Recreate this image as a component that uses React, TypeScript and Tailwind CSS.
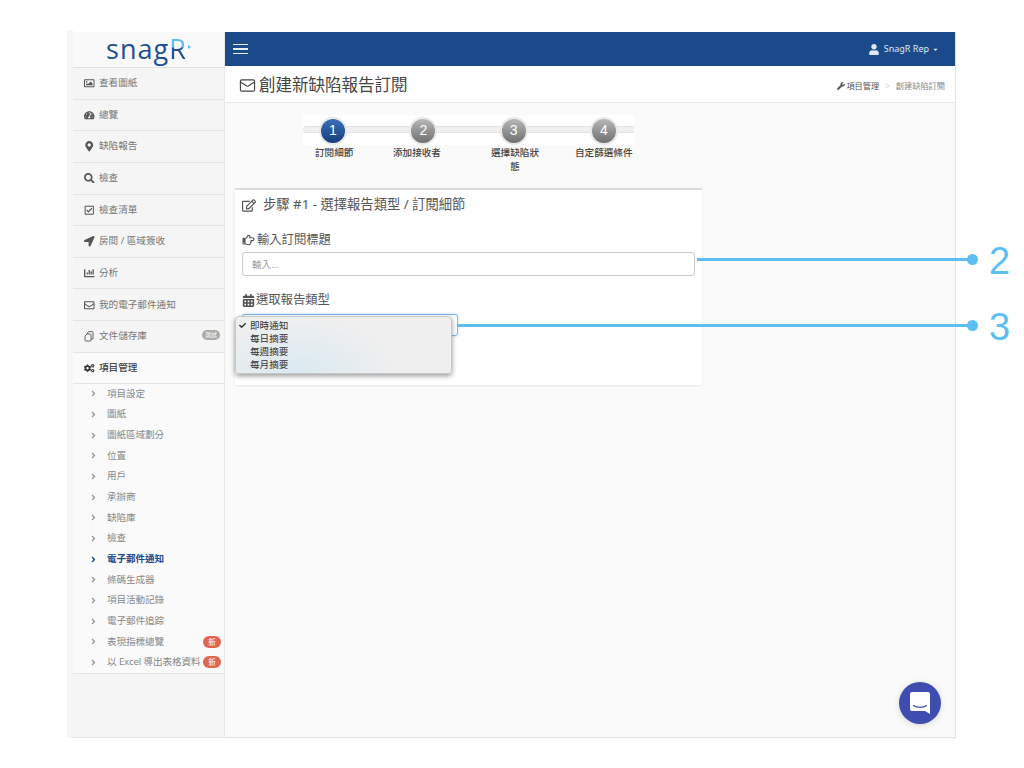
import React from 'react';
import {
  FaAngleRight,
  FaCalendarAlt,
  FaCaretDown,
  FaChartBar,
  FaCheck,
  FaCogs,
  FaLocationArrow,
  FaMapMarkerAlt,
  FaRegCheckSquare,
  FaRegEdit,
  FaRegEnvelope,
  FaRegHandPointRight,
  FaRegImage,
  FaSearch,
  FaTachometerAlt,
  FaUser,
  FaWrench,
} from 'react-icons/fa';
import { Mail } from 'lucide-react';

const FONT = "font-['Noto_Sans','Noto_Sans_CJK_TC',sans-serif]";

const FilesIcon = () => (
  <svg width="11" height="11" viewBox="0 0 11 11" fill="none" stroke="#555" strokeWidth="0.9">
    <path d="M3.5 3V1.8L4.8.6h3.4a.8.8 0 0 1 .8.8v6a.8.8 0 0 1-.8.8H7" />
    <path d="M1 5l2-2h3.2a.8.8 0 0 1 .8.8v5.4a.8.8 0 0 1-.8.8H1.8a.8.8 0 0 1-.8-.8z" />
  </svg>
);

const mainMenu = [
  { label: '查看圖紙', icon: <FaRegImage /> },
  { label: '總覽', icon: <FaTachometerAlt /> },
  { label: '缺陷報告', icon: <FaMapMarkerAlt /> },
  { label: '檢查', icon: <FaSearch /> },
  { label: '檢查清單', icon: <FaRegCheckSquare /> },
  { label: '房間 / 區域簽收', icon: <FaLocationArrow /> },
  { label: '分析', icon: <FaChartBar /> },
  { label: '我的電子郵件通知', icon: <FaRegEnvelope /> },
];

const subMenu = [
  { label: '項目設定' },
  { label: '圖紙' },
  { label: '圖紙區域劃分' },
  { label: '位置' },
  { label: '用戶' },
  { label: '承辦商' },
  { label: '缺陷庫' },
  { label: '檢查' },
  { label: '電子郵件通知', active: true },
  { label: '條碼生成器' },
  { label: '項目活動記錄' },
  { label: '電子郵件追踪' },
  { label: '表現指標總覽', isNew: true },
  { label: '以 Excel 導出表格資料', isNew: true },
];

const steps = ['訂閱細節', '添加接收者', '選擇缺陷狀態', '自定篩選條件'];

const MenuRow = ({ icon, label, badge, bold }: { icon: React.ReactNode; label: string; badge?: boolean; bold?: boolean }) => (
  <div className={`flex items-center h-[31.65px] pl-[11px] pr-[4px] border-b border-[#e4e4e4] text-[9.6px] ${bold ? 'text-[#444] font-medium' : 'text-[#777]'}`}>
    <span className={`w-[15px] text-[10.5px] flex justify-start ${bold ? 'text-[#333]' : 'text-[#555]'}`}>{icon}</span>
    <span>{label}</span>
    {badge && <span className="ml-auto -mt-[3px] bg-[#aaa] text-white text-[6px] leading-[10px] h-[10px] px-[3px] rounded-full">測試</span>}
  </div>
);

const Sidebar = () => (
  <aside className="w-[152px] shrink-0 flex flex-col bg-[#f5f5f5] border-r border-[#e8e8e8]">
    <div className="h-[36px] bg-[#f9f9f9] border-b border-[#e0e0e0] flex items-center justify-center pb-[3px]">
      <span className="font-['Open_Sans',sans-serif] font-medium text-[27px] leading-none tracking-[1px] text-[#1d5096]">
        snag
        <span className="bg-gradient-to-b from-[#5ebdf0] from-45% to-[#1d5096] to-50% bg-clip-text text-transparent">R</span>
      </span>
      <span className="w-0 h-0 mt-[-3px] ml-[1px] border-y-[2px] border-l-[3px] border-y-transparent border-l-[#5ebdf0]" />
    </div>
    {mainMenu.map(item => (
      <MenuRow key={item.label} icon={item.icon} label={item.label} />
    ))}
    <MenuRow icon={<FilesIcon />} label="文件儲存庫" badge />
    <div className="flex-1 flex flex-col">
      <div className="bg-[#fafafa] border-b border-[#e4e4e4]">
        <MenuRow icon={<FaCogs />} label="項目管理" bold />
        <ul className="-mt-[1px]">
          {subMenu.map(item => (
            <li
              key={item.label}
              className={`flex items-center h-[20.68px] pl-[17px] pr-[3px] text-[9.6px] ${item.active ? 'text-[#1d4a8a] font-bold' : 'text-[#888]'}`}
            >
              <FaAngleRight className={`w-[7px] h-[9px] mr-[10px] shrink-0 ${item.active ? 'text-[#1d4a8a]' : 'text-[#999]'}`} />
              <span className="whitespace-nowrap tracking-[-0.1px]">{item.label}</span>
              {item.isNew && (
                <span className="ml-auto bg-[#e2654f] text-white text-[7.5px] leading-[12px] h-[12px] w-[18px] text-center rounded-full shrink-0">新</span>
              )}
            </li>
          ))}
        </ul>
      </div>
    </div>
  </aside>
);

const Stepper = () => (
  <div className="ml-[78px] mt-[12px] w-[331px]">
    <div className="relative h-[30px] bg-white flex items-center">
      <div className="absolute left-0 right-0 top-[11px] h-[7px] rounded-l-full bg-[#f0f0f0] border-y border-[#e2e2e2]" />
      <div className="relative flex pl-[16px] gap-[62.3px] mt-[1px]">
        {[1, 2, 3, 4].map(n => (
          <div
            key={n}
            className={`w-[28px] h-[28px] rounded-full border-[2px] border-[#e8e8e8] flex items-center justify-center text-[14px] font-['Liberation_Sans',sans-serif] text-white ${n === 1 ? 'bg-gradient-to-b from-[#3a71b5] to-[#153f7d]' : 'bg-gradient-to-b from-[#b8b8b8] to-[#707070]'}`}
          >
            {n}
          </div>
        ))}
      </div>
    </div>
    <div className="relative h-[30px] mt-[1px] text-[9.6px] leading-[14px] font-medium text-[#444] text-center">
      <span className="absolute left-[12px] whitespace-nowrap">{steps[0]}</span>
      <span className="absolute left-[90px] whitespace-nowrap">{steps[1]}</span>
      <span className="absolute left-[187px] w-[50px]">{steps[2]}</span>
      <span className="absolute left-[272px] whitespace-nowrap">{steps[3]}</span>
    </div>
  </div>
);

const Panel = () => (
  <section className="ml-[10px] mt-[12px] w-[467px] h-[197px] bg-white border-t-2 border-[#dcdcdc] shadow-[0_1px_2px_rgba(0,0,0,0.08)] px-[7px]">
    <h2 className="flex items-center h-[30px] text-[13.3px] text-[#555] font-normal">
      <FaRegEdit className="w-[14px] h-[13px] mr-[7px]" />
      步驟 #1 - 選擇報告類型 / 訂閱細節
    </h2>
    <label className="flex items-center mt-[10px] h-[20px] text-[12.3px] text-[#555]">
      <FaRegHandPointRight className="w-[13px] h-[12px] mr-[2px]" />
      輸入訂閱標題
    </label>
    <input
      placeholder="輸入..."
      className="block w-[453px] h-[24px] mt-[2px] px-[9px] bg-white border border-[#cccccc] rounded-[3px] text-[9.6px] placeholder:text-[#999] outline-none"
    />
    <label className="flex items-center mt-[14px] h-[20px] text-[12.3px] text-[#555]">
      <FaCalendarAlt className="w-[13px] h-[13px] mr-[1px]" />
      選取報告類型
    </label>
    <div className="w-[216px] h-[22px] mt-[4px] border border-[#7fb7e8] rounded-[3px] bg-white shadow-[0_0_3px_rgba(100,170,230,0.5)]" />
  </section>
);

const Dropdown = () => (
  <div className="absolute left-[235px] top-[316px] w-[217px] h-[58px] rounded-[4px] border border-[#c8c8c8] bg-[radial-gradient(ellipse_100px_60px_at_60px_58px,#d9e9f1,#efefef)] shadow-[0_2px_5px_rgba(0,0,0,0.4)] py-[2px] text-[9.6px] leading-[13px] text-[#333]">
    {['即時通知', '每日摘要', '每週摘要', '每月摘要'].map((option, i) => (
      <div key={option} className="flex items-center pl-[3px]">
        <span className="w-[11px] shrink-0">{i === 0 && <FaCheck className="w-[7px] h-[7px]" />}</span>
        {option}
      </div>
    ))}
  </div>
);

const Callout = ({ top, left, width, n }: { top: string; left: string; width: string; n: string }) => (
  <div className={`absolute flex items-center h-[12px] ${top} ${left}`}>
    <div className={`h-[3px] bg-[#5bbff2] ${width}`} />
    <div className="w-[11px] h-[11px] -ml-[5px] rounded-full bg-[#5bbff2]" />
    <span className="absolute left-full ml-[11px] mt-[3px] font-['Liberation_Sans',sans-serif] text-[38px] leading-none text-[#5bbff2]">{n}</span>
  </div>
);

export default function App() {
  return (
    <div className={`relative w-[1024px] h-[768px] bg-white overflow-hidden ${FONT}`}>
      <div className="absolute left-[67px] top-[30px] w-[6px] h-[708px] bg-[#f6f6f6]" />
      <div className="relative ml-[73px] pt-[32px]">
        <div className="flex w-[883px] h-[706px] border-r border-b border-[#e2e2e2]">
          <Sidebar />
          <main className="flex-1 flex flex-col bg-[#fafafa]">
            <header className="h-[34px] shrink-0 bg-[#1b4a8b] flex items-center justify-between pl-[8px] pr-[16px] text-white">
              <div className="flex flex-col gap-[3px] w-[15px]">
                <span className="h-[1.5px] bg-[#e6edf6]" />
                <span className="h-[1.5px] bg-[#e6edf6]" />
                <span className="h-[1.5px] bg-[#e6edf6]" />
              </div>
              <div className="flex items-center text-[9px] text-[#dfe7f2]">
                <FaUser className="w-[10px] h-[11px] mr-[5px]" />
                SnagR Rep
                <FaCaretDown className="w-[7px] h-[7px] ml-[3px]" />
              </div>
            </header>
            <div className="h-[37px] shrink-0 bg-white border-b border-[#e8e8e8] flex items-center justify-between pl-[14px] pr-[10px]">
              <h1 className="flex items-center mt-[3px] text-[16.5px] font-normal text-[#444]">
                <Mail className="w-[17px] h-[17px] mr-[3px]" strokeWidth={1.6} />
                創建新缺陷報告訂閱
              </h1>
              <div className="flex items-center text-[8.2px] mt-[4px] text-[#555]">
                <FaWrench className="w-[8px] h-[8px] mr-[1px]" />
                項目管理
                <span className="mx-[6px] text-[#ccc]">&gt;</span>
                <span className="text-[#888]">創建缺陷訂閱</span>
              </div>
            </div>
            <Stepper />
            <Panel />
          </main>
        </div>
      </div>
      <Dropdown />
      <Callout top="top-[253px]" left="left-[697px]" width="w-[275px]" n="2" />
      <Callout top="top-[319px]" left="left-[458px]" width="w-[514px]" n="3" />
      <button className="absolute left-[899px] top-[682px] w-[42px] h-[42px] rounded-full bg-[#3f4db0] flex items-center justify-center shadow-[0_1px_6px_rgba(0,0,0,0.15)]">
        <svg width="20" height="22" viewBox="0 0 20 22">
          <path d="M2 0h16a2 2 0 0 1 2 2v20l-5-3H2a2 2 0 0 1-2-2V2a2 2 0 0 1 2-2z" fill="#fff" />
          <path d="M3.5 13.5c3 2.4 10 2.4 13 0" fill="none" stroke="#3f4db0" strokeWidth="1.2" strokeLinecap="round" />
        </svg>
      </button>
    </div>
  );
}
